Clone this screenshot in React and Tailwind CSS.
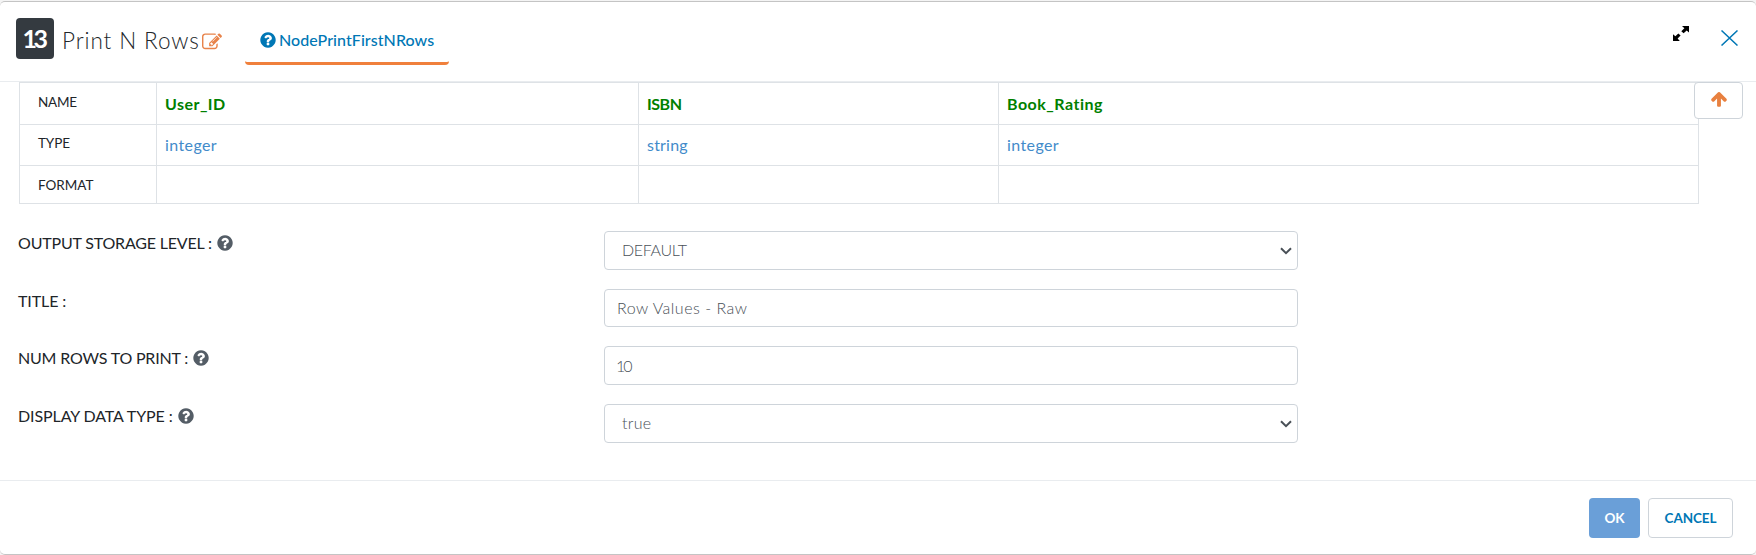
import React from 'react';

function QuestionIcon({ className }) {
  return (
    <svg viewBox="0 0 1792 1792" fill="currentColor" className={className}>
      <path d="M1024 1376v-192q0-14-9-23t-23-9h-192q-14 0-23 9t-9 23v192q0 14 9 23t23 9h192q14 0 23-9t9-23zm256-672q0-88-55.5-163t-138.5-116-170-41q-243 0-371 213-15 24 8 42l132 100q7 6 19 6 16 0 25-12 53-68 86-92 34-24 86-24 48 0 85.5 26t37.5 59q0 38-20 61t-68 45q-63 28-115.5 86.5t-52.5 125.5v36q0 14 9 23t23 9h192q14 0 23-9t9-23q0-19 21.5-49.5t54.5-49.5q32-18 49-28.5t46-35 44.5-48 28-60.5 12.5-81zm384 192q0 209-103 385.5t-279.5 279.5-385.5 103-385.5-103-279.5-279.5-103-385.5 103-385.5 279.5-279.5 385.5-103 385.5 103 279.5 279.5 103 385.5z" />
    </svg>
  );
}

function EditIcon({ className }) {
  return (
    <svg viewBox="0 0 1792 1792" fill="currentColor" className={className}>
      <path d="M888 1184l116-116-152-152-116 116v56h96v96h56zm440-720q-16-16-33 1l-350 350q-17 17-1 33t33-1l350-350q17-17 1-33zm80 594v190q0 119-84.5 203.5t-203.5 84.5h-832q-119 0-203.5-84.5t-84.5-203.5v-832q0-119 84.5-203.5t203.5-84.5h832q63 0 117 25 15 7 18 23 3 17-9 29l-49 49q-14 14-32 8-23-6-45-6h-832q-66 0-113 47t-47 113v832q0 66 47 113t113 47h832q66 0 113-47t47-113v-126q0-13 9-22l64-64q15-15 35-7t20 29zm-96-738l288 288-672 672h-288v-288zm444 132l-92 92-288-288 92-92q28-28 68-28t68 28l152 152q28 28 28 68t-28 68z" />
    </svg>
  );
}

function ArrowUpIcon({ className }) {
  return (
    <svg viewBox="0 0 1792 1792" fill="currentColor" className={className}>
      <path d="M1675 971q0 51-37 90l-75 75q-38 38-91 38-54 0-90-38l-294-293v704q0 52-37.5 84.5t-90.5 32.5h-128q-53 0-90.5-32.5t-37.5-84.5v-704l-294 293q-36 38-90 38t-90-38l-75-75q-38-38-38-90 0-53 38-91l651-651q35-37 90-37 54 0 91 37l651 651q37 39 37 91z" />
    </svg>
  );
}

function Field({ label, labelClass, help, value, valueClass, select }) {
  return (
    <div className="flex h-[57.7px] items-start">
      <div className="-ml-px flex w-[586px] shrink-0 items-center pt-[2px] leading-[20px] text-[#212529]">
        <span className={`whitespace-nowrap text-[16px] ${labelClass}`}>{label}</span>
        {help && <QuestionIcon className="-mt-px ml-[4px] size-[18px] text-[#545d66]" />}
      </div>
      <div className={`flex h-[38.6px] w-[694px] items-center justify-between rounded-[4px] border border-[#ced4da] bg-white pr-[5px] text-[16px] font-light text-[#495057] ${select ? 'pl-[17px]' : 'pl-[12px]'}`}>
        <span className={valueClass}>{value}</span>
        {select && (
          <svg viewBox="0 0 12 8" className="mt-px h-[8px] w-[12px]" fill="none" stroke="#495057" strokeWidth="2">
            <path d="M1 1.2L6 6.2L11 1.2" />
          </svg>
        )}
      </div>
    </div>
  );
}

const cell = 'border border-[#dee2e6] p-0 align-top';
const head = 'block pl-[18px] text-[13.5px] leading-[16px] text-[#212529]';

export default function App() {
  return (
    <div className="h-[555px] w-[1756px] bg-[#f4f4f4] pt-px font-['Lato',sans-serif]">
      <div className="flex h-[554px] flex-col overflow-hidden rounded-[5px] border-y border-[#c4c4c4] bg-white">
        <header className="flex h-[80px] shrink-0 items-start border-b border-[#e9ecef] pl-[16px]">
          <div className="mt-[16px] flex h-[41px] w-[38px] items-center justify-center rounded-[4px] bg-[#343a40] text-[25px] font-bold leading-none tracking-[-3.5px] text-white">
            <span className="mr-[3px]">13</span>
          </div>
          <h1 className="ml-[8px] mt-[24px] w-[140px] whitespace-nowrap text-[22.5px] font-light leading-[30px] tracking-[0.9px] text-[#212529]">Print N Rows</h1>
          <EditIcon className="mt-[30px] size-[20px] text-[#e8834a]" />
          <div className="ml-[23px] flex h-[63px] w-[204px] items-center rounded-b-[4px] border-b-[3px] border-[#f0803c] pl-[14px] pt-[16px] text-[#0077b5]">
            <QuestionIcon className="size-[18px]" />
            <span className="ml-[2px] text-[16px] font-medium tracking-[0.06px]">NodePrintFirstNRows</span>
          </div>
          <svg viewBox="0 0 16 15" className="ml-auto mt-[24px] h-[15px] w-[16px]">
            <path d="M9 0H16V6.5L13.7 4.4L10.6 7.2L8.3 5.2L11.4 2.3ZM0 8.2L2.4 10.3L5.3 7.5L7.6 9.5L4.6 12.4L6.8 15H0Z" fill="#000" />
          </svg>
          <svg viewBox="0 0 17 16" className="ml-[32px] mr-[18px] mt-[28px] h-[16px] w-[17px]" stroke="#0077b5" strokeWidth="1.5">
            <path d="M0.5 0.5L16.5 15.5M16.5 0.5L0.5 15.5" />
          </svg>
        </header>

        <main className="relative h-[399px] shrink-0 border-b border-[#e9ecef] pl-[19px]">
          <table className="w-[1680px] table-fixed border-collapse">
            <colgroup>
              <col className="w-[137px]" />
              <col className="w-[482px]" />
              <col className="w-[360px]" />
              <col className="w-[700px]" />
            </colgroup>
            <tbody>
              <tr className="h-[42px]">
                <td className={cell}><span className={`${head} pt-[11px] tracking-[-0.25px]`}>NAME</span></td>
                <td className={cell}><b className="block pl-[8px] pt-[11px] text-[16px] leading-[20px] tracking-[0.45px] text-[#008000]">User_ID</b></td>
                <td className={cell}><b className="block pl-[8px] pt-[11px] text-[16px] leading-[20px] tracking-[-0.45px] text-[#008000]">ISBN</b></td>
                <td className={cell}><b className="block pl-[8px] pt-[11px] text-[16px] leading-[20px] tracking-[0.5px] text-[#008000]">Book_Rating</b></td>
              </tr>
              <tr className="h-[41px]">
                <td className={cell}><span className={`${head} pt-[10px] tracking-[-0.1px]`}>TYPE</span></td>
                <td className={cell}><span className="block pl-[8px] pt-[10px] text-[16px] leading-[20px] tracking-[0.4px] text-[#428bca]">integer</span></td>
                <td className={cell}><span className="block pl-[8px] pt-[10px] text-[16px] leading-[20px] tracking-[0.2px] text-[#428bca]">string</span></td>
                <td className={cell}><span className="block pl-[8px] pt-[10px] text-[16px] leading-[20px] tracking-[0.4px] text-[#428bca]">integer</span></td>
              </tr>
              <tr className="h-[38px]">
                <td className={cell}><span className={`${head} pt-[11px]`}>FORMAT</span></td>
                <td className={cell} />
                <td className={cell} />
                <td className={cell} />
              </tr>
            </tbody>
          </table>
          <button className="absolute left-[1694px] top-0 flex h-[37px] w-[49px] items-center justify-center rounded-[4px] border border-[#ced4da] bg-white">
            <ArrowUpIcon className="-mt-[4px] size-[18px] text-[#e8803f]" />
          </button>

          <div className="mt-[27px]">
            <Field label="OUTPUT STORAGE LEVEL :" labelClass="tracking-[-0.18px]" help select value="DEFAULT" valueClass="tracking-[-0.35px]" />
            <Field label="TITLE :" labelClass="tracking-[-0.1px]" value="Row Values - Raw" valueClass="tracking-[0.5px]" />
            <Field label="NUM ROWS TO PRINT :" labelClass="tracking-[-0.18px]" help value="10" valueClass="-ml-px tracking-[-2px]" />
            <Field label="DISPLAY DATA TYPE :" labelClass="tracking-[-0.1px]" help select value="true" valueClass="tracking-[0.3px]" />
          </div>
        </main>

        <footer className="flex grow items-start justify-end gap-[8px] pr-[23px] pt-[17px]">
          <button className="h-[40px] w-[51px] rounded-[4px] bg-[#6a9fd8] text-[13.5px] font-bold text-white">OK</button>
          <button className="h-[40px] w-[85px] rounded-[4px] border border-[#ced4da] bg-white text-[13.5px] font-bold tracking-[-0.1px] text-[#0077b5]">CANCEL</button>
        </footer>
      </div>
    </div>
  );
}
